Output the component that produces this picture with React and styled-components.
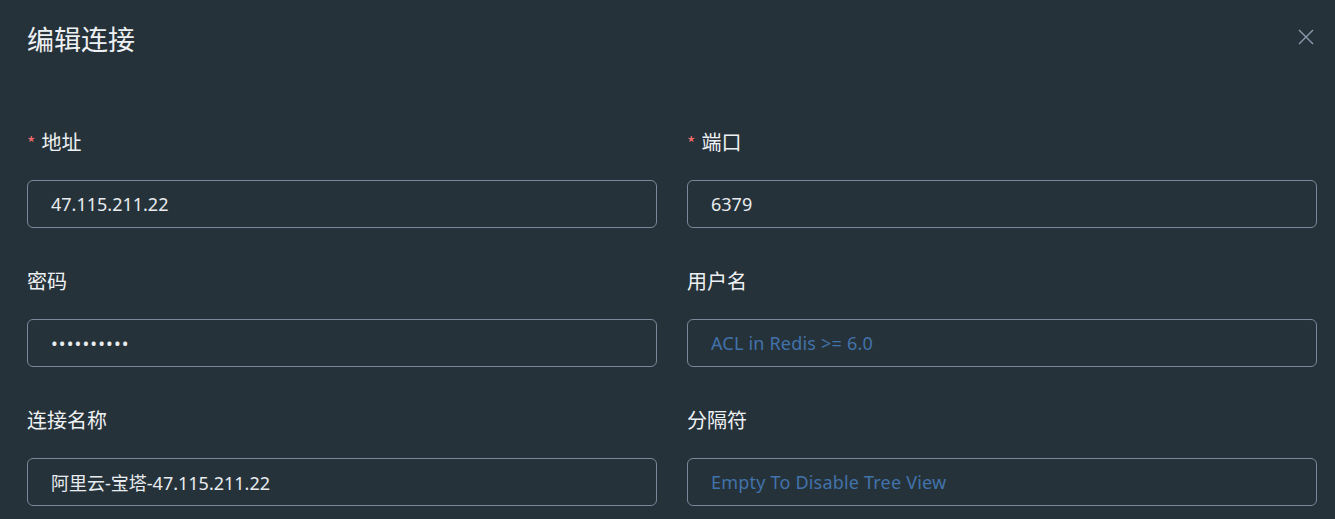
import styled, { createGlobalStyle } from 'styled-components';

const GlobalStyle = createGlobalStyle`
    html, body {
        margin: 0;
        padding: 0;
        background: #263239;
        overflow: hidden;
    }
    body {
        font-family: 'Noto Sans', 'Noto Sans CJK SC', sans-serif;
    }
`;

const fields = [
    { label: '地址', required: true, value: '47.115.211.22' },
    { label: '端口', required: true, value: '6379' },
    { label: '密码', type: 'password', value: '1234567890' },
    { label: '用户名', placeholder: 'ACL in Redis >= 6.0' },
    { label: '连接名称', value: '阿里云-宝塔-47.115.211.22' },
    { label: '分隔符', placeholder: 'Empty To Disable Tree View' },
];

function App() {
    return (
        <Dialog>
            <GlobalStyle />
            <Header>
                <Title>编辑连接</Title>
                <CloseButton aria-label="close">
                    <svg width="16" height="16" viewBox="0 0 16 16">
                        <path d="M1 1 L15 15 M15 1 L1 15" stroke="#8d9db0" strokeWidth="1.4" />
                    </svg>
                </CloseButton>
            </Header>
            <Form>
                {fields.map((f) => (
                    <Field key={f.label}>
                        <Label>
                            {f.required && <Star>*</Star>}
                            {f.label}
                        </Label>
                        <Input
                            type={f.type || 'text'}
                            $masked={f.type === 'password'}
                            defaultValue={f.value}
                            placeholder={f.placeholder}
                            readOnly
                        />
                    </Field>
                ))}
            </Form>
        </Dialog>
    );
}

export default App;

const Dialog = styled.div`
    width: 100%;
    min-height: 519px;
    background: #263239;
`;

const Header = styled.header`
    height: 78px;
    display: flex;
    align-items: center;
    justify-content: space-between;
    padding: 0 21px 0 27px;
    box-sizing: border-box;
`;

const Title = styled.h2`
    margin: 0;
    font-family: 'Noto Sans CJK SC', sans-serif;
    font-weight: 400;
    font-size: 27px;
    line-height: 38px;
    color: #eef1f4;
`;

const CloseButton = styled.button`
    width: 16px;
    height: 16px;
    margin-top: -4px;
    padding: 0;
    border: none;
    background: transparent;
    display: flex;
    cursor: pointer;
`;

const Form = styled.form`
    display: grid;
    grid-template-columns: 630px 630px;
    column-gap: 30px;
    row-gap: 41px;
    padding: 52px 18px 0 27px;
`;

const Field = styled.div`
    display: flex;
    flex-direction: column;
`;

const Label = styled.label`
    font-family: 'Noto Sans CJK SC', sans-serif;
    font-size: 20px;
    line-height: 24px;
    color: #eef1f4;
    margin-bottom: 26px;
`;

const Star = styled.span`
    color: #f56c6c;
    margin-right: 6px;
    font-size: 18px;
`;

const Input = styled.input`
    box-sizing: border-box;
    height: 48px;
    width: 100%;
    padding: 0 23px;
    border: 1px solid #7b879a;
    border-radius: 6px;
    background: #263239;
    color: #e8ecf0;
    font-family: 'Noto Sans', 'Noto Sans CJK SC', sans-serif;
    font-size: 18px;
    letter-spacing: ${(p) => (p.$masked ? '1.1px' : 'normal')};
    outline: none;

    &::placeholder {
        color: #4272ab;
        opacity: 1;
        letter-spacing: 0.2px;
    }
`;
